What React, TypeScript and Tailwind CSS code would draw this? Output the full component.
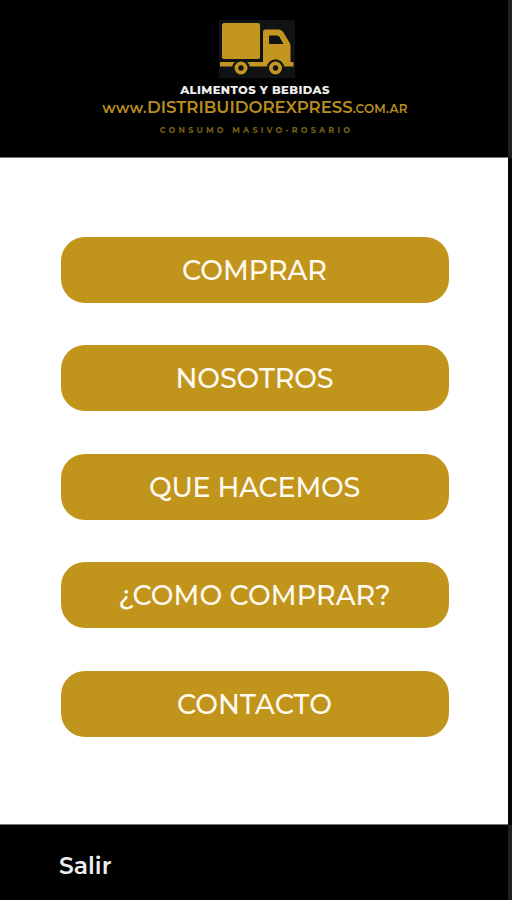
const items = [
  { label: "COMPRAR", tracking: "tracking-normal" },
  { label: "NOSOTROS", tracking: "tracking-[-0.1px]" },
  { label: "QUE HACEMOS", tracking: "tracking-[-0.2px]" },
  { label: "¿COMO COMPRAR?", tracking: "tracking-[0.1px]" },
  { label: "CONTACTO", tracking: "tracking-[0.1px]" },
];

function Truck() {
  return (
    <svg viewBox="0 0 76 58" className="block h-[58px] w-[76px] shrink-0 bg-[#111214]">
      <g fill="#c39620">
        <rect x="3" y="3" width="38" height="36" rx="2" />
        <path d="M44 42V12q0-2.500 2.500-2.500H59q3.500 0 5.500 3l6 10q1 1.500 1 3.500V42h2q1 0 1 1v3.500H1V43q0-1 1-1Z" />
      </g>
      <path d="M51 15.500h7q1.500 0 2.500 1.500l4 7H51q-1 0-1-1v-6.500q0-1 1-1Z" fill="#111214" />
      <g fill="#c39620" stroke="#111214" strokeWidth="2.2">
        <circle cx="22" cy="48" r="7.6" />
        <circle cx="56.500" cy="48" r="7.6" />
      </g>
      <g fill="#111214">
        <circle cx="22" cy="48" r="2.700" />
        <circle cx="56.500" cy="48" r="2.700" />
      </g>
    </svg>
  );
}

export default function App() {
  return (
    <div className="flex h-[900px] w-[512px] overflow-hidden bg-[#050505] font-['Montserrat','Inter',sans-serif]">
      <main className="flex w-[508px] flex-col bg-white">
        <header className="flex h-[158px] flex-col items-center border-b border-[#777] bg-black pt-5 pl-[2px] whitespace-nowrap">
          <div className="pl-[4px]"><Truck /></div>
          <div className="mt-[6px] h-3 text-[11.500px] leading-3 font-extrabold tracking-[0.4px] text-[#eee]">ALIMENTOS Y BEBIDAS</div>
          <div className="mt-[2px] flex h-[18px] items-baseline text-[#b98d20] leading-[18px]">
            <span className="text-[14.500px] font-semibold tracking-[0.5px]">www.</span>
            <span className="text-[16.600px] font-semibold">DISTRIBUIDOREXPRESS</span>
            <span className="text-[12px] font-semibold tracking-[0.2px]">.COM.AR</span>
          </div>
          <div className="mt-[8px] h-3 pl-[3px] text-[8px] leading-3 font-bold tracking-[3.200px] text-[#7c6018]">CONSUMO MASIVO-ROSARIO</div>
        </header>
        <nav className="flex flex-1 flex-col items-center gap-[42.5px] pt-[78.500px] pl-px">
          {items.map((item) => (
            <button key={item.label} className="flex h-[66px] w-[388px] shrink-0 items-center justify-center rounded-[24px] bg-[#c1941c] pt-[3px] text-[27px] font-medium whitespace-nowrap text-[#fffaf0]">
              <span className={item.tracking}>{item.label}</span>
            </button>
          ))}
        </nav>
        <footer className="flex h-[76px] items-center border-t border-[#777] bg-black pt-[7px] pl-[59px] text-[23.500px] font-semibold text-[#eee]">
          Salir
        </footer>
      </main>
      <aside className="flex w-1 flex-col">
        <div className="h-[158px] bg-[#202020]" />
        <div className="flex-1 bg-[#080808]" />
        <div className="h-[75px] bg-[#202020]" />
      </aside>
    </div>
  );
}
